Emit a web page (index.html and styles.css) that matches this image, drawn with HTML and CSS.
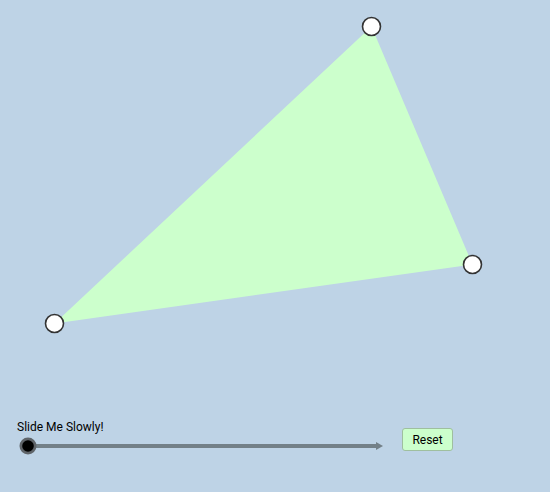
FILE: index.html
```html
<!DOCTYPE html>
<html>
<head>
<meta charset="utf-8">
<link rel="stylesheet" href="styles.css">
</head>
<body>
<div class="applet">
  <svg class="canvas" width="550" height="412" viewBox="0 0 550 412">
    <polygon points="371.5,26.5 472.5,264.5 54.5,323.5" fill="#ccffcc"/>
    <circle cx="371.5" cy="26.5" r="9" class="pt"/>
    <circle cx="472.5" cy="264.5" r="9" class="pt"/>
    <circle cx="54.5" cy="323.5" r="9" class="pt"/>
  </svg>
  <div class="controls">
    <div class="slider-block">
      <div class="label">Slide Me Slowly!</div>
      <svg class="slider" width="370" height="24" viewBox="0 0 370 24">
        <rect x="11" y="10" width="351" height="4" fill="#738088"/>
        <polygon points="359,8 366,12 359,16" fill="#738088"/>
        <circle cx="11" cy="12" r="8.5" fill="#5f6469"/>
        <circle cx="11" cy="12" r="5.8" fill="#000"/>
      </svg>
    </div>
    <button class="reset">Reset</button>
  </div>
</div>
</body>
</html>
```
FILE: styles.css
```css
html, body {
  margin: 0;
  padding: 0;
}
body {
  width: 550px;
  height: 492px;
  background: #bed3e6;
  overflow: hidden;
  font-family: Roboto, "Liberation Sans", sans-serif;
}
.applet {
  display: flex;
  flex-direction: column;
}
.canvas {
  display: block;
}
.pt {
  fill: #ffffff;
  stroke: #333333;
  stroke-width: 1.6;
}
.controls {
  display: flex;
  align-items: flex-start;
  padding: 8px 0 0 17px;
}
.slider-block {
  width: 385px;
  display: flex;
  flex-direction: column;
}
.label {
  font-size: 12px;
  line-height: 14px;
  color: #000;
}
.slider {
  display: block;
}
.reset {
  margin-top: 8px;
  width: 51px;
  height: 23px;
  padding: 0;
  background: #ccffcc;
  border: 1px solid #9fbf9f;
  border-radius: 3px;
  font-family: Roboto, "Liberation Sans", sans-serif;
  font-size: 12px;
  color: #000;
}
```
